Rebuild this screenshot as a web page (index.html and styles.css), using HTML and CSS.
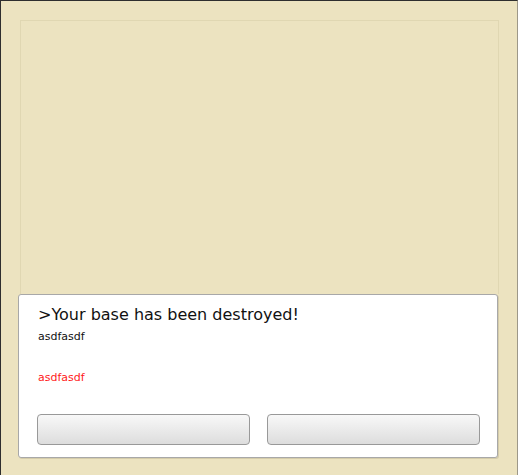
FILE: index.html
```html
<!DOCTYPE html>
<html>
<head>
<meta charset="utf-8">
<link rel="stylesheet" href="styles.css">
</head>
<body>
<div class="stage">
  <div class="panel"></div>
  <div class="dialog">
    <div class="title">&gt;Your base has been destroyed!</div>
    <div class="msg">asdfasdf</div>
    <div class="err">asdfasdf</div>
    <div class="buttons">
      <button class="btn"></button>
      <button class="btn"></button>
    </div>
  </div>
</div>
</body>
</html>
```
FILE: styles.css
```css
html, body {
  margin: 0;
  padding: 0;
}
body {
  width: 518px;
  height: 475px;
  box-sizing: border-box;
  background: #ece3c0;
  border-top: 1px solid #2e2e2e;
  border-left: 1px solid #2e2e2e;
  border-right: 1px solid #9d9888;
  font-family: "DejaVu Sans", Verdana, sans-serif;
  overflow: hidden;
}
.stage {
  display: flex;
  flex-direction: column;
  padding: 19px 18px 0 19px;
}
.panel {
  height: 273px;
  border: 1px solid #e0d7b2;
  border-bottom: none;
}
.dialog {
  position: relative;
  margin-left: -2px;
  width: 480px;
  height: 164px;
  box-sizing: border-box;
  background: #ffffff;
  border: 1px solid #a8a8a8;
  border-radius: 3px;
  box-shadow: 1px 1px 0 #d5ccaa;
  padding: 9px 16px 0 19px;
  display: flex;
  flex-direction: column;
}
.title {
  font-size: 16px;
  line-height: 22px;
  color: #111;
}
.msg {
  font-size: 11px;
  line-height: 14px;
  margin-top: 4px;
  color: #111;
}
.err {
  font-size: 11px;
  line-height: 14px;
  margin-top: 27px;
  color: #ff1a1a;
}
.buttons {
  display: grid;
  grid-template-columns: 213px 213px;
  gap: 17px;
  margin-top: 29px;
  margin-left: -1px;
}
.btn {
  height: 31px;
  border: 1px solid #999;
  border-radius: 4px;
  background: linear-gradient(#f8f8f8, #dddddd);
  padding: 0;
}
```
